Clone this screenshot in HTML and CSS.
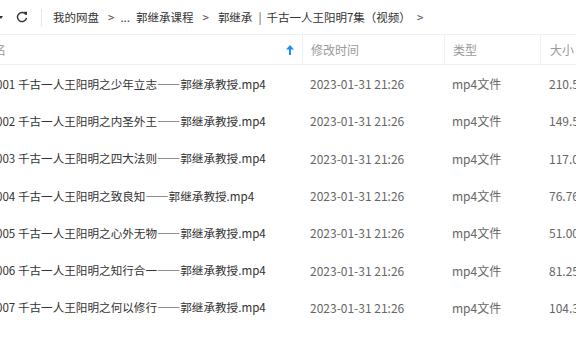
FILE: index.html
```html
<!DOCTYPE html>
<html lang="zh">
<head>
<meta charset="utf-8">
<link rel="stylesheet" href="styles.css">
</head>
<body>
<div class="page">
  <div class="toolbar">
    <span class="caret"></span>
    <svg class="refresh" width="12" height="12" viewBox="0 0 12 12"><path d="M10 3.6A4.6 4.6 0 1 0 10.6 7" fill="none" stroke="#333" stroke-width="1.4"/><path d="M7.6 0.8 L11 0.8 L11 4.2 Z" fill="#333"/></svg>
    <span class="vsep"></span>
    <nav class="crumbs">
      <span class="cr">我的网盘</span><span class="gt g1">&gt;</span><span class="dots">...</span><span class="cr">郭继承课程</span><span class="gt g2">&gt;</span><span class="cr">郭继承</span><span class="bar">|</span><span class="cr">千古一人王阳明7集（视频）</span><span class="gt g3">&gt;</span>
    </nav>
  </div>
  <div class="table">
    <div class="thead">
      <div class="c name">名<svg class="up" width="8" height="10" viewBox="0 0 8 10"><path d="M4 0 L8 4.5 L5 4.5 L5 10 L3 10 L3 4.5 L0 4.5 Z" fill="#1a8cff"/></svg></div>
      <div class="c date">修改时间</div>
      <div class="c type">类型</div>
      <div class="c size">大小</div>
    </div>
    <div class="row"><div class="c name">001 千古一人王阳明之少年立志——郭继承教授.mp4</div><div class="c date">2023-01-31 21:26</div><div class="c type">mp4文件</div><div class="c size">210.58MB</div></div>
    <div class="row"><div class="c name">002 千古一人王阳明之内圣外王——郭继承教授.mp4</div><div class="c date">2023-01-31 21:26</div><div class="c type">mp4文件</div><div class="c size">149.52MB</div></div>
    <div class="row"><div class="c name">003 千古一人王阳明之四大法则——郭继承教授.mp4</div><div class="c date">2023-01-31 21:26</div><div class="c type">mp4文件</div><div class="c size">117.03MB</div></div>
    <div class="row"><div class="c name">004 千古一人王阳明之致良知——郭继承教授.mp4</div><div class="c date">2023-01-31 21:26</div><div class="c type">mp4文件</div><div class="c size">76.76MB</div></div>
    <div class="row"><div class="c name">005 千古一人王阳明之心外无物——郭继承教授.mp4</div><div class="c date">2023-01-31 21:26</div><div class="c type">mp4文件</div><div class="c size">51.00MB</div></div>
    <div class="row"><div class="c name">006 千古一人王阳明之知行合一——郭继承教授.mp4</div><div class="c date">2023-01-31 21:26</div><div class="c type">mp4文件</div><div class="c size">81.25MB</div></div>
    <div class="row"><div class="c name">007 千古一人王阳明之何以修行——郭继承教授.mp4</div><div class="c date">2023-01-31 21:26</div><div class="c type">mp4文件</div><div class="c size">104.33MB</div></div>
  </div>
</div>
</body>
</html>
```
FILE: styles.css
```css
* { box-sizing: border-box; }
html, body { margin: 0; padding: 0; background: #fff; }
body {
  width: 576px;
  height: 356px;
  overflow: hidden;
  font-family: "Microsoft YaHei", "Noto Sans CJK SC", sans-serif;
  font-size: 12px;
  color: #333;
}
.page { width: 576px; overflow: hidden; }
.toolbar {
  height: 35px;
  display: flex;
  align-items: center;
  border-bottom: 1px solid #eef0f3;
  white-space: nowrap;
}
.caret {
  width: 0;
  height: 0;
  margin-left: -1px;
  border-left: 2.5px solid transparent;
  border-right: 2.5px solid transparent;
  border-top: 3.5px solid #333;
}
.refresh { margin-left: 13px; }
.vsep {
  width: 1px;
  height: 17px;
  background: #e3e5e8;
  margin-left: 13px;
}
.crumbs {
  display: flex;
  align-items: center;
  margin-left: 11px;
  font-size: 11.5px;
  color: #333;
}
.crumbs .gt { color: #444; }
.g1 { margin: 0 6px 0 9px; }
.g2 { margin: 0 9px 0 9px; }
.g3 { margin-left: 6px; }
.dots { margin-right: 6px; }
.bar { color: #555; margin: 0 5px 0 6px; }
.table { margin-left: -6px; }
.thead, .row {
  display: flex;
  white-space: nowrap;
}
.thead {
  height: 30px;
  border-bottom: 1px solid #eef0f3;
  color: #999;
  align-items: center;
}
.thead .c {
  height: 29px;
  display: flex;
  align-items: center;
}
.thead .date, .thead .type, .thead .size { border-left: 1px solid #eef0f3; }
.row {
  height: 37.3px;
  align-items: center;
}
.c { overflow: hidden; flex: none; }
.name { width: 308px; padding-left: 2px; position: relative; }
.row .name { font-size: 11.6px; color: #333; }
.thead .name { padding-left: 0; }
.up { position: absolute; right: 8px; top: 10px; }
.date { width: 142px; padding-left: 8px; color: #666; }
.type { width: 96px; padding-left: 8px; color: #666; }
.size { width: 60px; padding-left: 9px; color: #666; }
.thead .date, .thead .type, .thead .size { color: #999; }
```
